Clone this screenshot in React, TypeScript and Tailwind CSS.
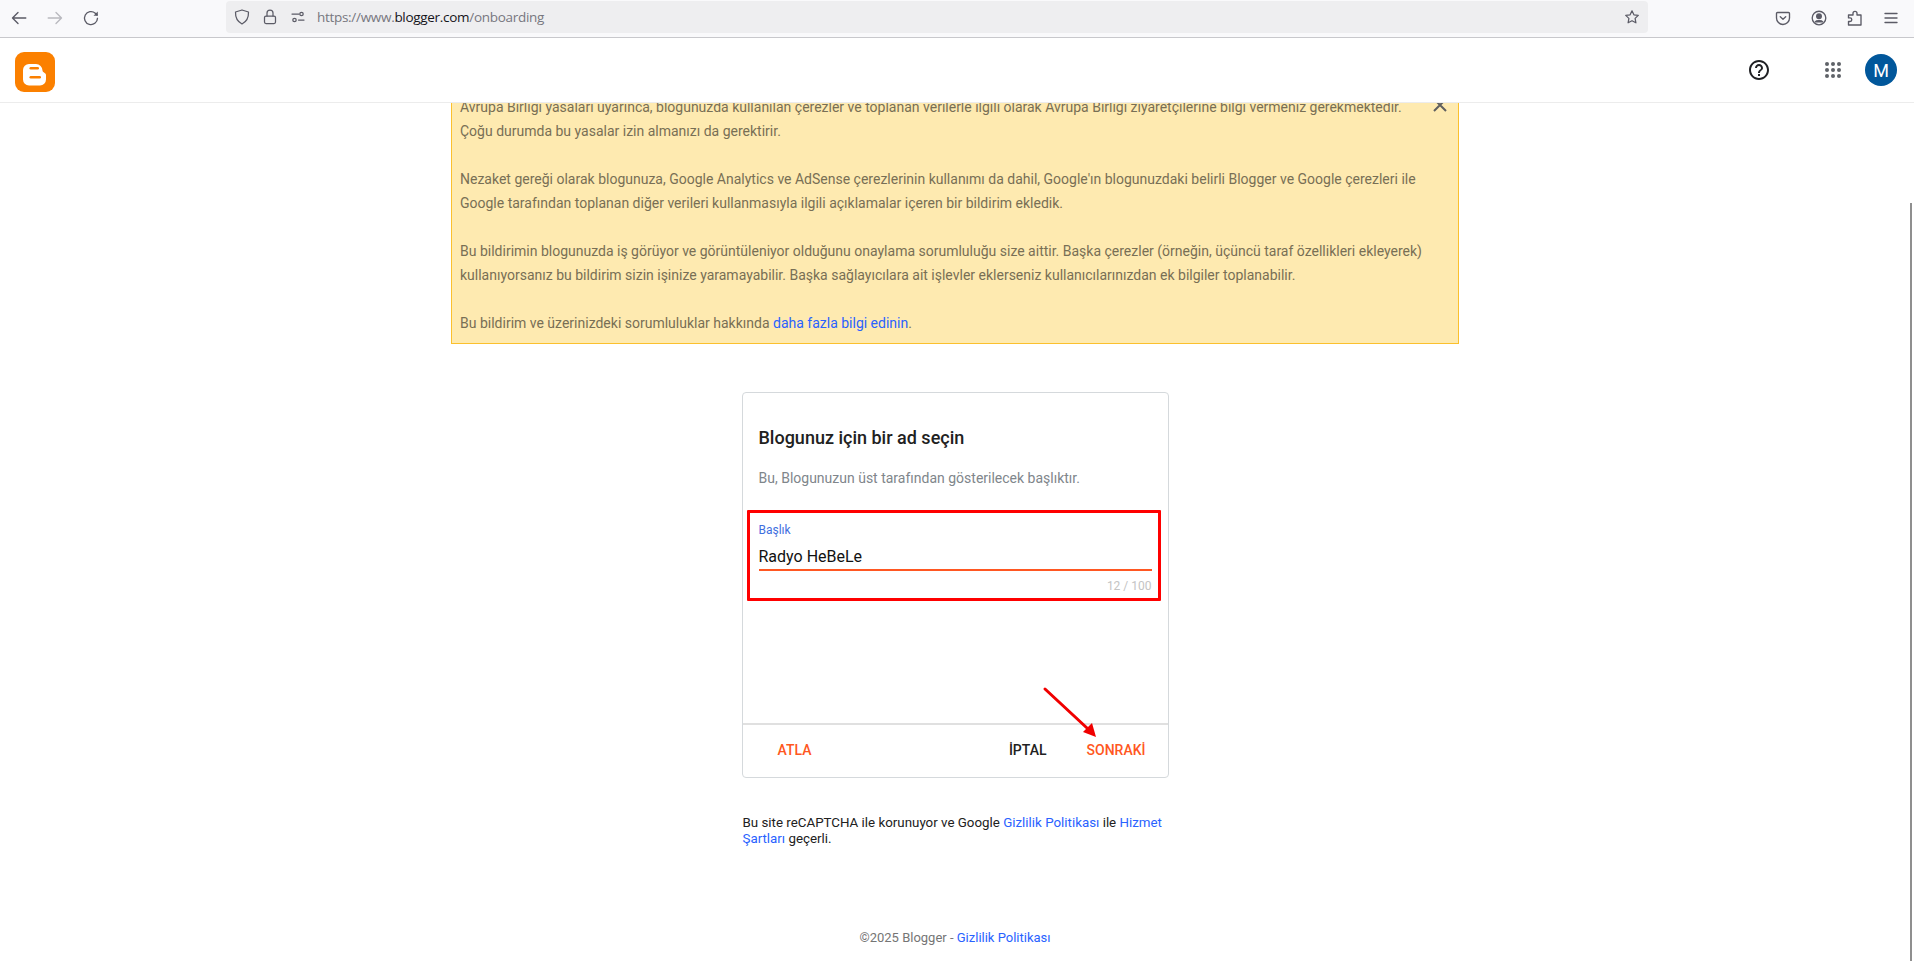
const BrowserIcon = ({ children, muted }: { children: React.ReactNode; muted?: boolean }) => (
  <div className={`w-9 h-9 flex items-center justify-center ${muted ? "text-[#b9b9bf]" : "text-[#5b5b66]"}`}>
    <svg width="16" height="16" viewBox="0 0 16 16" fill="none" stroke="currentColor" strokeWidth="1.35" strokeLinecap="round" strokeLinejoin="round">
      {children}
    </svg>
  </div>
);

const UrlIcon = ({ children, className }: { children: React.ReactNode; className: string }) => (
  <svg className={className} width="16" height="16" viewBox="0 0 16 16" fill="none" stroke="#5b5b66" strokeWidth="1.25" strokeLinecap="round" strokeLinejoin="round">
    {children}
  </svg>
);

const BrowserBar = () => (
  <div className="h-[38px] bg-[#f9f9fb] border-b border-[#c8c8cc] flex items-start shrink-0">
    <div className="flex ml-px">
      <BrowserIcon>
        <path d="M14.800 8H1.500M7 2.500 1.500 8 7 13.500" />
      </BrowserIcon>
      <BrowserIcon muted>
        <path d="M1.200 8h13.300M9 2.500 14.500 8 9 13.500" />
      </BrowserIcon>
      <BrowserIcon>
        <path d="M14.500 8.300A6.500 6.500 0 1 1 12.300 3.200L14 5" />
        <path d="M14.800 1.500v4.300h-4.300z" fill="currentColor" stroke="none" />
      </BrowserIcon>
    </div>
    <div className="ml-[117px] mt-px w-[1422px] h-[32px] rounded-[4px] bg-[#eeeef0] flex items-center">
      <UrlIcon className="ml-2">
        <path d="M8 1 14.500 3c.2 5.500-1.700 9.500-6.500 12C3.200 12.500 1.300 8.500 1.500 3L8 1z" />
      </UrlIcon>
      <UrlIcon className="ml-3">
        <rect x="2.500" y="7" width="11" height="7.500" rx="1.500" />
        <path d="M5 7V4a3 3 0 0 1 6 0v3" />
      </UrlIcon>
      <UrlIcon className="ml-3">
        <circle cx="11.500" cy="5" r="1.700" />
        <circle cx="4.500" cy="11" r="1.700" />
        <path d="M2 5h7M8.500 11H14" />
      </UrlIcon>
      <span className="ml-[11px] text-[13.5px] text-[#77777f] font-['Open_Sans',sans-serif] tracking-[-0.3px]">
        https://www.<span className="text-[#15141a]">blogger.com</span>/onboarding
      </span>
      <div className="ml-auto mr-2">
        <UrlIcon className="">
          <path d="M8 1.800l1.900 4 4.400.6-3.200 3 .8 4.400L8 11.700l-3.900 2.100.8-4.400-3.200-3 4.400-.6L8 1.800z" />
        </UrlIcon>
      </div>
    </div>
    <div className="ml-auto mr-[5px] flex">
      <BrowserIcon>
        <path d="M2.500 2.500h11a1 1 0 0 1 1 1V8a6.500 6.500 0 0 1-13 0V3.500a1 1 0 0 1 1-1zM5.300 6.800 8 9.300l2.700-2.500" />
      </BrowserIcon>
      <BrowserIcon>
        <circle cx="8" cy="8" r="6.800" />
        <circle cx="8" cy="6.300" r="2.300" fill="currentColor" />
        <path d="M4.300 11.800c1-1.500 6.400-1.500 7.400 0z" fill="currentColor" />
      </BrowserIcon>
      <BrowserIcon>
        <path d="M1.500 5H6V3.300a2 2 0 0 1 4 0V5h4v10H1.500v-3.500H3a1.800 1.800 0 0 0 0-3.600H1.500z" />
      </BrowserIcon>
      <BrowserIcon>
        <path d="M2 3.500h12M2 8h12M2 12.500h12" />
      </BrowserIcon>
    </div>
  </div>
);

const AppsGrid = () => (
  <svg width="16" height="16" viewBox="0 0 16 16" fill="#5f6368">
    {[2, 8, 14].map((y) =>
      [2, 8, 14].map((x) => <circle key={`${x}-${y}`} cx={x} cy={y} r="2" />)
    )}
  </svg>
);

const Header = () => (
  <header className="relative z-10 h-[65px] bg-white border-b border-[#ececec] flex items-center shrink-0">
    <svg className="ml-[15px] mt-1" width="40" height="40" viewBox="0 0 40 40">
      <rect width="40" height="40" rx="9" fill="#fb8000" />
      <path d="M14 12h7a6.500 6.500 0 0 1 6.500 6.500c0 .8.5 1.300 1.200 1.800 1.300.9 2.300 1.800 2.300 2.700v4.500a6 6 0 0 1-6 6H14a6 6 0 0 1-6-6V18a6 6 0 0 1 6-6z" fill="#fff" />
      <rect x="14.500" y="15" width="9.500" height="2.500" rx="1.250" fill="#fb8000" />
      <rect x="14.500" y="24" width="11.500" height="2.500" rx="1.250" fill="#fb8000" />
    </svg>
    <div className="ml-auto flex items-center">
      <svg width="24" height="24" viewBox="0 0 24 24" fill="#202124">
        <path d="M11 18h2v-2h-2v2zm1-16C6.480 2 2 6.480 2 12s4.480 10 10 10 10-4.480 10-10S17.520 2 12 2zm0 18c-4.410 0-8-3.590-8-8s3.590-8 8-8 8 3.590 8 8-3.590 8-8 8zm0-14c-2.210 0-4 1.790-4 4h2c0-1.100.9-2 2-2s2 .9 2 2c0 2-3 1.750-3 5h2c0-2.250 3-2.500 3-5 0-2.210-1.790-4-4-4z" />
      </svg>
      <div className="ml-[54px]">
        <AppsGrid />
      </div>
      <div className="ml-6 mr-[17px] w-8 h-8 rounded-full bg-[#01579b] text-white flex items-center justify-center text-[18px] font-['Roboto',sans-serif]">
        M
      </div>
    </div>
  </header>
);

const Notice = () => (
  <div className="relative w-[1008px] mx-auto -mt-[17px] bg-[#feeab0] border border-[#fbc02d] py-2 pl-2 pr-[29px] text-[14px] leading-6 text-[#786f55]">
    <svg className="absolute top-[11px] right-[11px]" width="14" height="14" viewBox="0 0 14 14" stroke="#5f5f5f" strokeWidth="2" fill="none">
      <path d="M1 1l12 12M13 1 1 13" />
    </svg>
    <p className="mb-6">
      Avrupa Birliği yasaları uyarınca, blogunuzda kullanılan çerezler ve toplanan verilerle ilgili olarak Avrupa Birliği ziyaretçilerine bilgi vermeniz gerekmektedir. Çoğu durumda bu yasalar izin almanızı da gerektirir.
    </p>
    <p className="mb-6">
      Nezaket gereği olarak blogunuza, Google Analytics ve AdSense çerezlerinin kullanımı da dahil, Google'ın blogunuzdaki belirli Blogger ve Google çerezleri ile Google tarafından toplanan diğer verileri kullanmasıyla ilgili açıklamalar içeren bir bildirim ekledik.
    </p>
    <p className="mb-6">
      Bu bildirimin blogunuzda iş görüyor ve görüntüleniyor olduğunu onaylama sorumluluğu size aittir. Başka çerezler (örneğin, üçüncü taraf özellikleri ekleyerek) kullanıyorsanız bu bildirim sizin işinize yaramayabilir. Başka sağlayıcılara ait işlevler eklerseniz kullanıcılarınızdan ek bilgiler toplanabilir.
    </p>
    <p>
      Bu bildirim ve üzerinizdeki sorumluluklar hakkında <a className="text-[#2962ff]">daha fazla bilgi edinin</a>.
    </p>
  </div>
);

const Card = () => (
  <div className="relative w-[427px] h-[386px] mx-auto mt-12 border border-[#d5d9dc] rounded-[4px] flex flex-col">
    <div className="flex-1 px-4 pt-[33px]">
      <h2 className="text-[18px] leading-6 font-medium text-[#212121]">Blogunuz için bir ad seçin</h2>
      <p className="mt-[18px] text-[14px] leading-5 text-[#80868b]">Bu, Blogunuzun üst tarafından gösterilecek başlıktır.</p>
      <label className="block mt-[34px] text-[12px] leading-4 text-[#3f6fe0]">Başlık</label>
      <input
        readOnly
        value="Radyo HeBeLe"
        className="block w-full mt-[6px] h-[27px] pb-px text-[16px] leading-6 text-[#111] border-b-2 border-[#ff5722] outline-none"
      />
      <div className="mt-[7px] text-right text-[12px] leading-4 text-[#c4c4c4]">12 / 100</div>
    </div>
    <div className="h-[54px] pb-px border-t-2 border-[#e0e0e0] flex items-center text-[14px] font-medium">
      <button className="ml-[35px] text-[#ff5722]">ATLA</button>
      <button className="ml-auto text-[#212121]">İPTAL</button>
      <button className="ml-10 mr-[22px] text-[#ff5722]">SONRAKİ</button>
    </div>

    {/* red markup drawn over the screenshot */}
    <div className="absolute left-[4px] top-[117px] w-[414px] h-[91px] border-[3px] border-[#ff0000] rounded-[1px]" />
    <svg className="absolute left-[297px] top-[291px]" width="62" height="60" viewBox="0 0 62 60">
      <path d="M5 5 47 44" stroke="#f00000" strokeWidth="3" strokeLinecap="round" />
      <path d="M56 53 43 48 52 39z" fill="#f00000" />
    </svg>
  </div>
);

export default function App() {
  return (
    <div className="relative h-screen overflow-hidden bg-white flex flex-col font-['Roboto',sans-serif]">
      <BrowserBar />
      <Header />
      <main className="pr-1">
        <Notice />
        <Card />
        <p className="w-[427px] mx-auto pl-px mt-[37px] text-[13.33px] leading-4 text-[#212121]">
          Bu site reCAPTCHA ile korunuyor ve Google <a className="text-[#2962ff]">Gizlilik Politikası</a> ile <a className="text-[#2962ff]">Hizmet Şartları</a> geçerli.
        </p>
        <footer className="mt-[83px] text-center text-[13px] leading-4 text-[#757575]">
          ©2025 Blogger - <a className="text-[#2962ff]">Gizlilik Politikası</a>
        </footer>
      </main>
      {/* scrollbar thumb */}
      <div className="absolute right-[2px] top-[203px] bottom-0 w-[2px] bg-[#8f8f8f]" />
    </div>
  );
}
